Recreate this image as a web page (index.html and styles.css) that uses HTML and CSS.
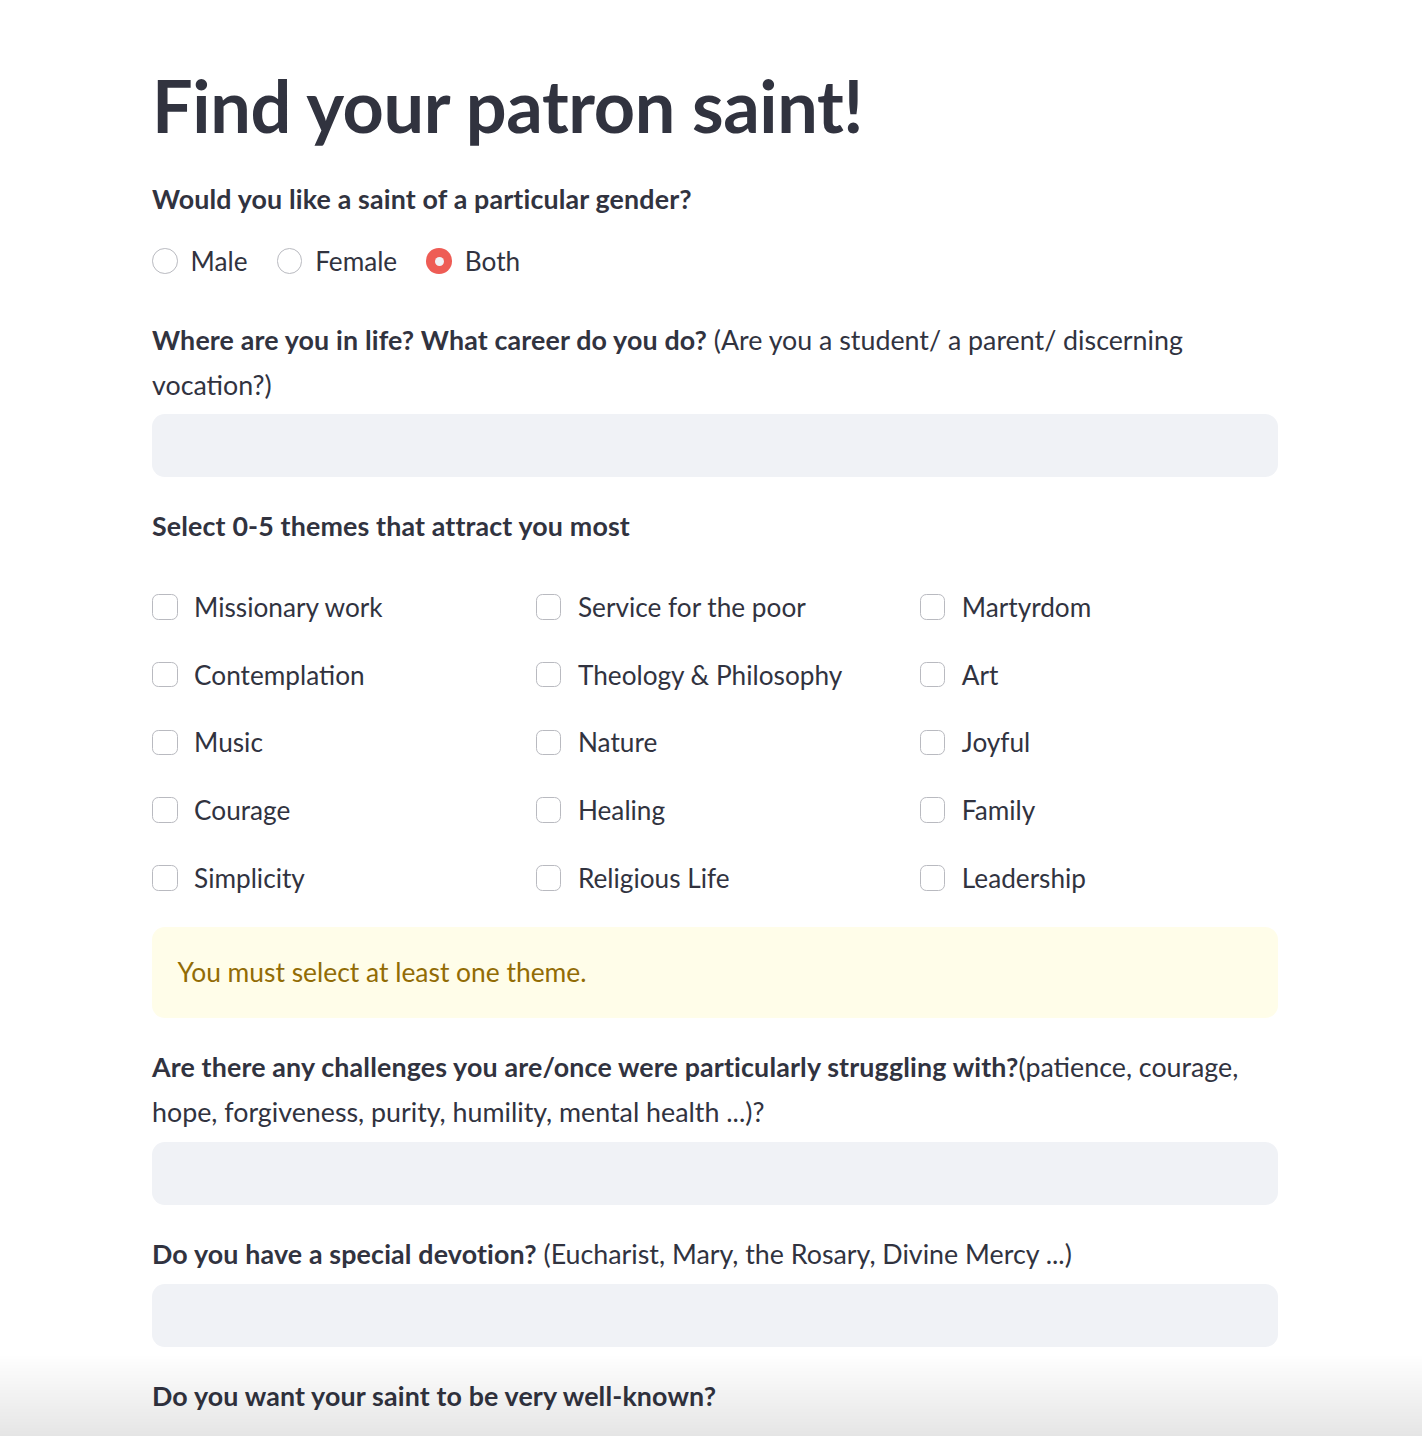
FILE: index.html
```html
<!DOCTYPE html>
<html lang="en">
<head>
<meta charset="utf-8">
<title>Find your patron saint!</title>
<link rel="stylesheet" href="styles.css">
</head>
<body>
<main class="main">
  <h1 class="title">Find your patron saint!</h1>

  <p class="label lbl-gender"><strong>Would you like a saint of a particular gender?</strong></p>
  <div class="radios">
    <label class="radio"><span class="dot"></span><span>Male</span></label>
    <label class="radio"><span class="dot"></span><span>Female</span></label>
    <label class="radio"><span class="dot on"></span><span>Both</span></label>
  </div>

  <p class="label lbl-career"><strong>Where are you in life? What career do you do?</strong> (Are you a student/ a parent/ discerning vocation?)</p>
  <div class="input"></div>

  <p class="label lbl-themes"><strong>Select 0-5 themes that attract you most</strong></p>
  <div class="grid">
    <label class="check"><span class="box"></span><span>Missionary work</span></label>
    <label class="check"><span class="box"></span><span>Service for the poor</span></label>
    <label class="check"><span class="box"></span><span>Martyrdom</span></label>
    <label class="check"><span class="box"></span><span>Contemplation</span></label>
    <label class="check"><span class="box"></span><span>Theology &amp; Philosophy</span></label>
    <label class="check"><span class="box"></span><span>Art</span></label>
    <label class="check"><span class="box"></span><span>Music</span></label>
    <label class="check"><span class="box"></span><span>Nature</span></label>
    <label class="check"><span class="box"></span><span>Joyful</span></label>
    <label class="check"><span class="box"></span><span>Courage</span></label>
    <label class="check"><span class="box"></span><span>Healing</span></label>
    <label class="check"><span class="box"></span><span>Family</span></label>
    <label class="check"><span class="box"></span><span>Simplicity</span></label>
    <label class="check"><span class="box"></span><span>Religious Life</span></label>
    <label class="check"><span class="box"></span><span>Leadership</span></label>
  </div>

  <div class="warning">You must select at least one theme.</div>

  <p class="label lbl-after"><strong>Are there any challenges you are/once were particularly struggling with?</strong>(patience, courage, hope, forgiveness, purity, humility, mental health ...)?</p>
  <div class="input"></div>

  <p class="label lbl-after"><strong>Do you have a special devotion?</strong> (Eucharist, Mary, the Rosary, Divine Mercy ...)</p>
  <div class="input"></div>

  <p class="label lbl-after"><strong>Do you want your saint to be very well-known?</strong></p>
</main>
<div class="fade"></div>
</body>
</html>
```
FILE: styles.css
```css
html, body {
  margin: 0;
  padding: 0;
  background: #ffffff;
}
body {
  font-family: "Lato", "Source Sans Pro", "Liberation Sans", sans-serif;
  color: #31333f;
  height: 1436px;
  overflow: hidden;
}
.main {
  width: 1126px;
  margin-left: 152px;
  padding-top: 63px;
}
.title {
  margin: 0;
  font-size: 72px;
  line-height: 84px;
  font-weight: 700;
  letter-spacing: -0.4px;
}
.label {
  margin: 0;
  font-size: 26.8px;
  line-height: 45px;
  font-weight: 400;
}
.label strong {
  font-weight: 700;
  letter-spacing: 0.15px;
}
.lbl-gender { margin-top: 29.5px; }
.lbl-career { margin-top: 40.5px; }
.lbl-themes { margin-top: 26.5px; }
.lbl-after { margin-top: 27.5px; }

.radios {
  margin-top: 23.5px;
  height: 32px;
  display: flex;
  align-items: center;
  gap: 29px;
}
.radio {
  display: flex;
  align-items: center;
  gap: 13px;
  font-size: 26.2px;
}
.dot {
  width: 25.6px;
  height: 25.6px;
  box-sizing: border-box;
  border-radius: 50%;
  border: 1.6px solid #b9bac0;
  background: #fff;
  display: flex;
  align-items: center;
  justify-content: center;
}
.dot.on {
  border: none;
  background: #ee5c55;
}
.dot.on::after {
  content: "";
  width: 9px;
  height: 9px;
  border-radius: 50%;
  background: #f0f2f6;
}

.input {
  margin-top: 6.5px;
  height: 63px;
  border-radius: 12.8px;
  background: #f0f2f6;
}

.grid {
  margin-top: 24.5px;
  display: grid;
  grid-template-columns: repeat(3, 1fr);
  column-gap: 25.6px;
  grid-auto-rows: 67.75px;
}
.check {
  display: flex;
  align-items: center;
  gap: 16.5px;
  font-size: 26.2px;
}
.box {
  width: 25.6px;
  height: 25.6px;
  box-sizing: border-box;
  border: 1.6px solid #b9bac0;
  border-radius: 6.4px;
  background: #fff;
  flex: none;
}

.warning {
  margin-top: 15px;
  height: 91px;
  box-sizing: border-box;
  padding: 0 25.6px;
  display: flex;
  align-items: center;
  background: #fffde9;
  border-radius: 12.8px;
  color: #926c05;
  font-size: 26.4px;
}

.fade {
  position: fixed;
  left: 0;
  right: 0;
  bottom: 0;
  height: 82px;
  pointer-events: none;
  background: linear-gradient(to bottom, rgba(0,0,0,0), rgba(0,0,0,0.1));
}
```
